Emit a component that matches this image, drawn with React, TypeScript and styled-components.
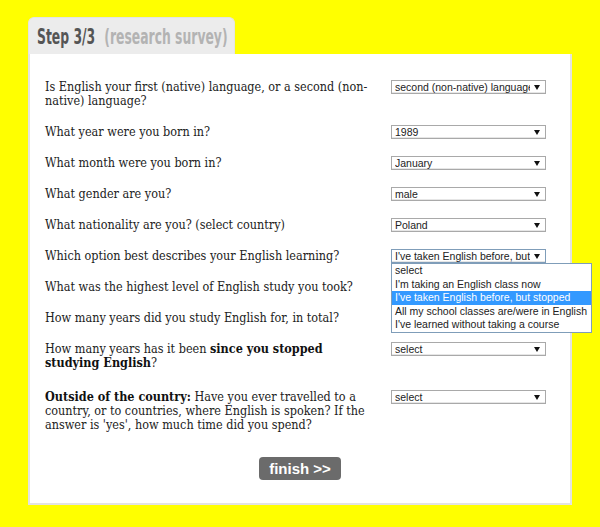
import React from 'react';
import styled, { createGlobalStyle } from 'styled-components';

const GlobalStyle = createGlobalStyle`
  html, body {
    margin: 0;
    padding: 0;
    background: #ffff00;
  }
`;

interface IQuestion {
  label: React.ReactNode;
  value: string;
  open?: boolean;
  spaced?: boolean;
}

const learningOptions = [
  'select',
  "I'm taking an English class now",
  "I've taken English before, but stopped",
  'All my school classes are/were in English',
  "I've learned without taking a course",
];

const questions: IQuestion[] = [
  {
    label: 'Is English your first (native) language, or a second (non-native) language?',
    value: 'second (non-native) language',
  },
  { label: 'What year were you born in?', value: '1989' },
  { label: 'What month were you born in?', value: 'January' },
  { label: 'What gender are you?', value: 'male' },
  { label: 'What nationality are you? (select country)', value: 'Poland' },
  {
    label: 'Which option best describes your English learning?',
    value: "I've taken English before, but stopped",
    open: true,
  },
  { label: 'What was the highest level of English study you took?', value: 'select' },
  { label: 'How many years did you study English for, in total?', value: 'select' },
  {
    label: (
      <>
        How many years has it been <b>since you stopped studying English</b>?
      </>
    ),
    value: 'select',
  },
  {
    label: (
      <>
        <b>Outside of the country:</b> Have you ever travelled to a country, or to
        countries, where English is spoken? If the answer is 'yes', how much time did
        you spend?
      </>
    ),
    value: 'select',
    spaced: true,
  },
];

const App = () => {
  return (
    <>
      <GlobalStyle />
      <Page>
        <Tab>
          <TabTitle>
            <StepTitle>Step 3/3</StepTitle>
            <StepNote>(research survey)</StepNote>
          </TabTitle>
        </Tab>
        <Panel>
          <Form>
            {questions.map((q, i) => (
              <React.Fragment key={i}>
                <Question $spaced={q.spaced}>{q.label}</Question>
                <Field $spaced={q.spaced}>
                  <SelectBox $focused={q.open}>
                    <SelectText>{q.value}</SelectText>
                    <Arrow />
                  </SelectBox>
                  {q.open && (
                    <OptionList>
                      {learningOptions.map((opt) => (
                        <Option key={opt} $selected={opt === q.value}>
                          {opt}
                        </Option>
                      ))}
                    </OptionList>
                  )}
                </Field>
              </React.Fragment>
            ))}
          </Form>
          <Actions>
            <FinishButton>finish &gt;&gt;</FinishButton>
          </Actions>
        </Panel>
      </Page>
    </>
  );
};

export default App;

const Page = styled.div`
  padding: 17px 0 0 28px;
  width: 544px;
`;

const Tab = styled.div`
  display: flex;
  align-items: center;
  width: 207px;
  height: 37px;
  box-sizing: border-box;
  padding: 2px 0 0 8px;
  background-color: #ececec;
  border: 1px solid #e4e4e4;
  border-bottom: none;
  border-radius: 6px 6px 0 0;
`;

/* the heading face is a heavy condensed one; squeeze the bold sans to match */
const TabTitle = styled.div`
  display: flex;
  gap: 14px;
  white-space: nowrap;
  transform: scaleX(0.655);
  transform-origin: left center;
  font-family: 'DejaVu Sans Condensed', 'DejaVu Sans', sans-serif;
  font-weight: bold;
  font-size: 21px;
`;

const StepTitle = styled.span`
  color: #555555;
`;

const StepNote = styled.span`
  color: #b3b3b3;
`;

const Panel = styled.div`
  background-color: #ffffff;
  border: 2px solid #e3e3e3;
  border-top: none;
  padding: 26px 0 23px 15px;
`;

const Form = styled.div`
  display: grid;
  grid-template-columns: 330px 155px;
  column-gap: 16px;
  row-gap: 17px;
`;

const Question = styled.div<{ $spaced?: boolean }>`
  margin-top: ${(p) => (p.$spaced ? '3px' : '0')};
  font-family: 'DejaVu Serif Condensed', 'DejaVu Serif', Georgia, serif;
  font-size: 12.5px;
  line-height: 14px;
  color: #222222;
  b {
    color: #111111;
  }
`;

const Field = styled.div<{ $spaced?: boolean }>`
  position: relative;
  margin-top: ${(p) => (p.$spaced ? '3px' : '0')};
`;

const SelectBox = styled.div<{ $focused?: boolean }>`
  display: flex;
  align-items: center;
  height: 14px;
  box-sizing: border-box;
  padding: 0 5px 0 3px;
  border: 1px solid ${(p) => (p.$focused ? '#7f9db9' : '#a9a9a9')};
  box-shadow: inset 0 -1px 0 #e6e6e6;
  background-color: #ffffff;
  font-family: 'Liberation Sans', Arial, sans-serif;
  font-size: 10.5px;
  color: #222222;
  overflow: hidden;
`;

const SelectText = styled.span`
  flex: 1;
  white-space: nowrap;
  overflow: hidden;
`;

const Arrow = styled.span`
  flex: none;
  width: 0;
  height: 0;
  margin-left: 4px;
  border-left: 3px solid transparent;
  border-right: 3px solid transparent;
  border-top: 5px solid #111111;
`;

const OptionList = styled.div`
  position: absolute;
  top: 100%;
  left: 0;
  width: 201px;
  box-sizing: border-box;
  border: 1px solid #7f9db9;
  background-color: #ffffff;
  z-index: 2;
  font-family: 'Liberation Sans', Arial, sans-serif;
  font-size: 10.5px;
`;

const Option = styled.div<{ $selected?: boolean }>`
  height: 13.6px;
  line-height: 13.6px;
  padding: 0 3px;
  white-space: nowrap;
  color: ${(p) => (p.$selected ? '#ffffff' : '#222222')};
  background-color: ${(p) => (p.$selected ? '#3399ff' : 'transparent')};
`;

const Actions = styled.div`
  display: flex;
  justify-content: center;
  margin-top: 25px;
  padding-right: 15px;
`;

const FinishButton = styled.button`
  width: 82px;
  height: 23px;
  border: none;
  border-radius: 4px;
  background-color: #6b6b6b;
  color: #ffffff;
  font-family: 'Liberation Sans', Arial, sans-serif;
  font-weight: bold;
  font-size: 15px;
  padding: 0;
`;
